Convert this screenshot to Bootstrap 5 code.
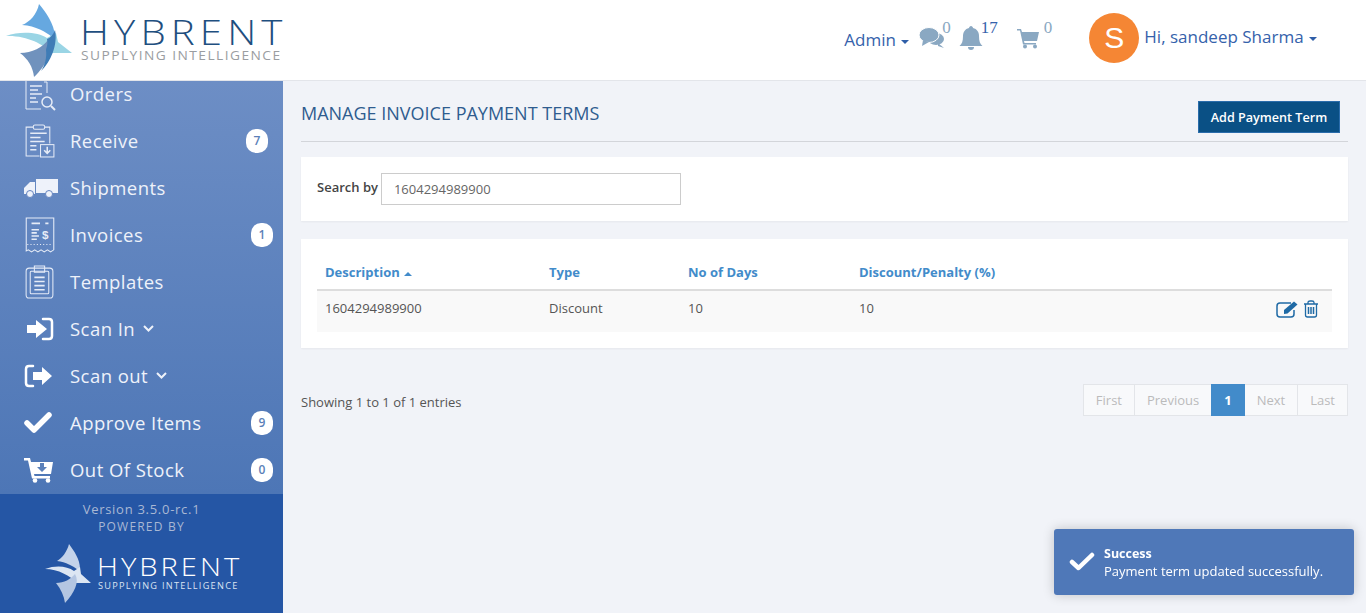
<!DOCTYPE html>
<html>
<head>
  <title>Manage Invoice Payment Terms</title>
  <link href="https://cdn.jsdelivr.net/npm/bootstrap@5.3.0/dist/css/bootstrap.min.css" rel="stylesheet">
  <style>
    body { font-family: "Open Sans", "Liberation Sans", sans-serif; background: #f1f3f8; color: #555; overflow: hidden; }
    .top-bar { height: 81px; background: #fff; border-bottom: 1px solid #e3e5ea; flex: none; }
    .top-tools { margin-right: 49px; margin-bottom: 4px; }
    .top-link { color: #3562ab; font-size: 17px; text-decoration: none; }
    .admin-link { margin-top: 4px; }
    .name-link { margin-bottom: 2px; margin-left: 5px; }
    .caret-down { display: inline-block; width: 0; height: 0; border: 4px solid transparent; border-top-color: #2f5ea8; border-bottom: 0; vertical-align: middle; margin-left: 1px; }
    .top-count { font-family: "Liberation Serif", serif; font-size: 17px; color: #8aa8c2; line-height: 1; align-self: flex-start; margin-top: 6px; }
    .top-count.dark { color: #3562ab; }
    .ico-chat { margin-left: 10px; }
    .count-chat { margin-left: -3px; }
    .ico-bell { margin-left: 8px; }
    .count-bell { margin-left: -2px; }
    .ico-cart { margin-left: 18px; }
    .count-cart { margin-left: 4px; }
    .avatar { width: 50px; height: 50px; border-radius: 50%; background: #f58634; color: #fff; font-family: "Liberation Sans", sans-serif; font-size: 30px; line-height: 50px; text-align: center; margin-left: 37px; }
    .side { width: 283px; flex: none; }
    .side-nav { background: linear-gradient(#6d8ec5, #4d76b6); overflow: hidden; min-height: 0; }
    .side-row { height: 47px; flex: none; padding-left: 24px; padding-bottom: 2px; color: #eef2fa; font-size: 18.5px; letter-spacing: .45px; text-decoration: none; }
    .side-ico { width: 46px; flex: none; display: flex; }
    .side-pill { width: 22px; height: 24px; border-radius: 10px; background: #fff; color: #5b7fb8; font-size: 12px; font-weight: 600; letter-spacing: 0; text-align: center; line-height: 24px; margin-left: auto; margin-right: 10px; }
    .side-pill.wide { margin-right: 15px; }
    .side-foot { height: 119px; flex: none; background: #2556a5; color: #a9b8d4; text-align: center; }
    .ver-line { font-size: 13px; letter-spacing: .72px; line-height: 18px; padding-top: 6px; }
    .pow-line { font-size: 12px; letter-spacing: 1.2px; line-height: 18px; }
    .foot-logo { margin-top: 7px; }
    .content-area { padding: 0 18px; min-width: 0; }
    .page-title { font-size: 18px; color: #2f5c8f; font-weight: 400; margin: 2px 0 0; }
    .title-row { height: 61px; border-bottom: 1px solid #d3d5da; padding-top: 20px; }
    .add-btn { background: #0a5085; border: 1px solid #2a6cab; border-radius: 0; color: #fff; font-size: 12.6px; font-weight: 600; width: 142px; height: 32px; padding: 3px 0 0; margin-right: 8px; }
    .add-btn:hover { background: #0a5085; color: #fff; }
    .white-box { background: #fff; box-shadow: 0 1px 2px rgba(0,0,0,.05); padding: 16px; }
    .search-box { margin-top: 15px; }
    .table-box { margin-top: 18px; }
    .search-label { font-size: 13px; font-weight: 600; color: #444; margin-right: 3px; margin-bottom: 2px; }
    .search-input { width: 300px; height: 32px; border: 1px solid #ccc; border-radius: 0; padding: 0 12px; font-size: 13px; color: #666; }
    .terms-table { table-layout: fixed; margin: 0; font-size: 13px; line-height: 20px; }
    .terms-table th { color: #428bca; font-weight: 700; border-bottom: 2px solid #ddd; padding: 7px 8px; }
    .terms-table td { background: #f9f9f9; color: #555; padding: 7px 8px 14px; border: 0; vertical-align: top; }
    .col-desc { width: 224px; }
    .col-type { width: 139px; }
    .col-days { width: 171px; }
    .row-tools { margin-top: 2px; margin-right: 5px; }
    .caret-up { display: inline-block; width: 0; height: 0; border: 4px solid transparent; border-bottom-color: #428bca; border-top: 0; vertical-align: middle; margin-left: 1px; }
    .pager-row { margin-top: 36px; }
    .info-text { font-size: 13px; color: #555; margin-top: 6px; }
    .pager .page-link { font-size: 13px; height: 32px; line-height: 30px; padding: 0 12px; color: #bbb; background: #f8f9fb; border: 1px solid #e3e5e9; border-radius: 0 !important; }
    .pager .page-item.active .page-link { background: #428bca; border-color: #428bca; color: #fff; font-weight: 700; }
    .done-toast { position: fixed; right: 12px; bottom: 18px; width: 300px; height: 66px; background: #4f78b8; border-radius: 3px; color: #fff; font-size: 13px; line-height: 18px; box-shadow: 0 0 12px rgba(0,0,0,.2); padding-left: 15px; }
    .toast-text { padding-top: 1px; margin-left: 1px; }
    .toast-head { font-size: 12.5px; font-weight: 700; line-height: 16px; }
  </style>
</head>
<body>
  <div class="d-flex flex-column vh-100">
    <header class="top-bar d-flex align-items-center">
      <svg width="290" height="80" viewBox="0 0 290 80">
        <path d="M39 4C46 12 54 24 55 36L52 37C46 32 36 26 22 25C30 22 37 14 39 4Z" fill="#66a8e0"/>
        <path d="M6 36C20 31 38 32 47 38L56 33L58 42L72 53L50 53C45 44 25 35 6 36Z" fill="#9ad5e5"/>
        <path d="M20 53C32 53 43 47 48 40C54 50 46 66 34 77C33 67 28 59 20 53Z" fill="#7092bd"/>
        <path d="M55 30C58 44 51 62 41 71C45 65 47 57 46 50C47 46 48 44 47 39C50 38 53 35 55 30Z" fill="#3f7cb6"/>
        <text transform="translate(80 45) scale(1.15 1)" font-family="Open Sans" font-weight="300" font-size="35" fill="#1f4f7f" textLength="176">HYBRENT</text>
        <text transform="translate(81 60) scale(1.1 1)" font-family="Open Sans" font-size="12.500" fill="#9a9da1" textLength="181">SUPPLYING INTELLIGENCE</text>
      </svg>
      <div class="ms-auto d-flex align-items-center top-tools">
        <a class="top-link admin-link" href="#">Admin <span class="caret-down"></span></a>
        <svg class="ico-chat" width="26" height="24" viewBox="0 0 26 24"><ellipse cx="17" cy="13" rx="8" ry="6" fill="#8aa8c2"/><path d="M19 17L25 22L19 20Z" fill="#8aa8c2"/><ellipse cx="10" cy="9" rx="10" ry="7.500" fill="#8aa8c2" stroke="#fff"/><path d="M4 14L3 20L10 16Z" fill="#8aa8c2"/></svg>
        <span class="top-count count-chat">0</span>
        <svg class="ico-bell" width="24" height="26" viewBox="0 0 24 26"><path d="M12 1C13 1 14 2 14 3C18 4 20 7 20 11C20 16 21 19 23.500 21H.5C3 19 4 16 4 11C4 7 6 4 10 3C10 2 11 1 12 1Z" fill="#8aa8c2"/><path d="M9 22H15C15 24 14 25 12 25C10 25 9 24 9 22Z" fill="#8aa8c2"/></svg>
        <span class="top-count dark count-bell">17</span>
        <svg class="ico-cart" width="24" height="22" viewBox="0 0 24 22"><path d="M1 2H5L6 5H23L21 14H8L8.500 16H20V17.500H7L4 3.500H1Z" fill="#8aa8c2"/><circle cx="9" cy="19.500" r="2" fill="#8aa8c2"/><circle cx="19" cy="19.500" r="2" fill="#8aa8c2"/></svg>
        <span class="top-count count-cart">0</span>
        <div class="avatar">S</div>
        <a class="top-link name-link" href="#">Hi, sandeep Sharma <span class="caret-down"></span></a>
      </div>
    </header>

    <div class="d-flex flex-grow-1 overflow-hidden">
      <aside class="side d-flex flex-column">
        <nav class="side-nav flex-grow-1 d-flex flex-column justify-content-end">
          <a class="side-row d-flex align-items-center" href="#">
            <span class="side-ico"><svg width="32" height="36" viewBox="0 0 32 36" fill="none" stroke="#e6ecf7" stroke-width="1"><path d="M13 2H2V33H17M23 17V6H20"/><path d="M6 10H18M6 14H14M6 18H18M6 22H12M6 26H14" stroke-width="1.500"/><circle cx="23" cy="26" r="5" stroke-width="1.500"/><path d="M27 30L31 34" stroke-width="2"/></svg></span>
            Orders
          </a>
          <a class="side-row d-flex align-items-center" href="#">
            <span class="side-ico"><svg width="31" height="35" viewBox="0 0 30 34" fill="none" stroke="#e6ecf7" stroke-width="1"><path d="M9 4H2V32H15M20 4H25V20"/><rect x="9" y="2" width="11" height="4" rx="1.500"/><path d="M6 10H22M6 14H16M6 18H20M6 22H12M6 26H12" stroke-width="1.500"/><rect x="16" y="21" width="13" height="12"/><path d="M22.500 23V29M19.500 26.500L22.500 29.500L25.500 26.500" stroke-width="1.500"/></svg></span>
            Receive
            <span class="side-pill wide">7</span>
          </a>
          <a class="side-row d-flex align-items-center" href="#">
            <span class="side-ico"><svg width="34" height="20" viewBox="0 0 34 20"><path d="M12 1H34V15H12Z" fill="#eef2fa"/><path d="M11 4H6L0 10V16H11Z" fill="#eef2fa"/><circle cx="6" cy="16" r="3.500" fill="#eef2fa" stroke="#6483bf"/><circle cx="25" cy="16" r="3.500" fill="#eef2fa" stroke="#6483bf"/></svg></span>
            Shipments
          </a>
          <a class="side-row d-flex align-items-center" href="#">
            <span class="side-ico"><svg width="32" height="36" viewBox="0 0 30 34" fill="none" stroke="#e6ecf7" stroke-width="1"><path d="M2 1H28V31L25 33L22 31L19 33L16 31L13 33L10 31L7 33L4 31L2 32Z"/><path d="M7 6H15M20 6H23M7 12H14M7 15H12M7 18H14M7 21H12" stroke-width="1.500"/><path d="M3 26H27" stroke-dasharray="1 2"/><text x="17" y="21" font-family="Liberation Sans" font-size="11" font-weight="700" fill="#e6ecf7" stroke="none">$</text></svg></span>
            Invoices
            <span class="side-pill">1</span>
          </a>
          <a class="side-row d-flex align-items-center" href="#">
            <span class="side-ico"><svg width="31" height="35" viewBox="0 0 30 34" fill="none" stroke="#e6ecf7" stroke-width="1"><rect x="2" y="4" width="26" height="29" rx="3"/><rect x="6" y="7" width="18" height="22" rx="1"/><path d="M10 4V2H20V4M10 4V8H20V4"/><path d="M10 13H20M10 17H20M10 21H20M10 25H20" stroke-width="1.500"/></svg></span>
            Templates
          </a>
          <a class="side-row d-flex align-items-center" href="#">
            <span class="side-ico"><svg width="30" height="24" viewBox="0 0 30 24"><path d="M3 8H12V3L23 12L12 21V16H3Z" fill="#fff"/><path d="M19 2H25C27 2 28 3 28 5V19C28 21 27 22 25 22H19" fill="none" stroke="#fff" stroke-width="2.500" stroke-linecap="round"/></svg></span>
            <span>Scan In</span><svg class="ms-2" width="11" height="7" viewBox="0 0 11 7"><path d="M1 1L5.500 5.500L10 1" fill="none" stroke="#eef2fa" stroke-width="2"/></svg>
          </a>
          <a class="side-row d-flex align-items-center" href="#">
            <span class="side-ico"><svg width="29" height="24" viewBox="0 0 29 24"><path d="M9 2H5C3 2 2 3 2 5V19C2 21 3 22 5 22H9" fill="none" stroke="#fff" stroke-width="2.500" stroke-linecap="round"/><path d="M9 8H18V3L28 12L18 21V16H9Z" fill="#fff"/></svg></span>
            <span>Scan out</span><svg class="ms-2" width="11" height="7" viewBox="0 0 11 7"><path d="M1 1L5.500 5.500L10 1" fill="none" stroke="#eef2fa" stroke-width="2"/></svg>
          </a>
          <a class="side-row d-flex align-items-center" href="#">
            <span class="side-ico"><svg width="28" height="22" viewBox="0 0 28 22"><path d="M3 11L10 18L25 3" fill="none" stroke="#fff" stroke-width="5.500" stroke-linejoin="round" stroke-linecap="round"/></svg></span>
            Approve Items
            <span class="side-pill">9</span>
          </a>
          <a class="side-row d-flex align-items-center" href="#">
            <span class="side-ico"><svg width="30" height="26" viewBox="0 0 30 26"><path d="M0 1H6L7 5H29L27 17H10L10.500 19H26V21.500H8L4 3.500H0Z" fill="#fff"/><circle cx="11" cy="23.500" r="2.300" fill="#fff"/><circle cx="24" cy="23.500" r="2.300" fill="#fff"/><path d="M16 6H20V10H23L18 15L13 10H16Z" fill="#5a80ba"/></svg></span>
            Out Of Stock
            <span class="side-pill">0</span>
          </a>
        </nav>
        <div class="side-foot">
          <div class="ver-line">Version 3.5.0-rc.1</div>
          <div class="pow-line">POWERED BY</div>
          <svg class="d-block foot-logo" width="283" height="65" viewBox="0 0 283 65">
            <path d="M69 1C74 8 80 16 80 26L78 27C73 23 66 19 57 18C62 15 67 9 69 1Z" fill="#c4d3ea"/>
            <path d="M45 26C56 22 67 23 74 28L80 24L81 31L91 40L76 40C71 33 58 26 45 26Z" fill="#dce6f3"/>
            <path d="M56 40C64 40 71 36 75 31C80 39 74 50 65 60C64 53 61 46 56 40Z" fill="#b4c6e2"/>
            <text transform="translate(97 33) scale(1.12 1)" font-family="Open Sans" font-weight="300" font-size="26" fill="#fff" textLength="127">HYBRENT</text>
            <text transform="translate(98 46) scale(1.08 1)" font-family="Open Sans" font-size="8.500" fill="#dbe4f3" textLength="129">SUPPLYING INTELLIGENCE</text>
          </svg>
        </div>
      </aside>

      <main class="flex-grow-1 content-area">
        <div class="title-row d-flex justify-content-between">
          <h1 class="page-title">MANAGE INVOICE PAYMENT TERMS</h1>
          <button class="btn add-btn" type="button">Add Payment Term</button>
        </div>

        <div class="white-box search-box d-flex align-items-center">
          <label class="search-label" for="searchBy">Search by</label>
          <input class="form-control search-input" id="searchBy" value="1604294989900">
        </div>

        <div class="white-box table-box">
          <table class="table terms-table">
            <colgroup><col class="col-desc"><col class="col-type"><col class="col-days"><col></colgroup>
            <thead>
              <tr><th>Description <span class="caret-up"></span></th><th>Type</th><th>No of Days</th><th>Discount/Penalty (%)</th></tr>
            </thead>
            <tbody>
              <tr>
                <td>1604294989900</td><td>Discount</td><td>10</td>
                <td>
                  <div class="d-flex justify-content-between">
                    <span>10</span>
                    <span class="d-flex gap-1 row-tools">
                      <svg width="23" height="18" viewBox="0 0 23 18" fill="none"><path d="M15 3H4C2 3 1 4.500 1 6V14C1 15.500 2 17 4 17H15C17 17 18 15.500 18 14V10" stroke="#1f6aa5" stroke-width="1.500"/><path d="M8 10L18 1.500L21.500 4.500L11.500 13.500L8 14Z" fill="#1f6aa5"/></svg>
                      <svg width="16" height="18" viewBox="0 0 16 18" fill="none" stroke="#1f6aa5" stroke-width="1.300"><path d="M1 4H15M5 4V2.500C5 1.500 6 1 7 1H9C10 1 11 1.500 11 2.500V4M2.500 4V15C2.500 16 3.500 17 4.500 17H11.500C12.500 17 13.500 16 13.500 15V4"/><path d="M5.500 7V14M8 7V14M10.500 7V14" stroke-width="1.500"/></svg>
                    </span>
                  </div>
                </td>
              </tr>
            </tbody>
          </table>
        </div>

        <div class="pager-row d-flex justify-content-between align-items-center">
          <span class="info-text">Showing 1 to 1 of 1 entries</span>
          <ul class="pagination pager m-0">
            <li class="page-item"><a class="page-link" href="#">First</a></li>
            <li class="page-item"><a class="page-link" href="#">Previous</a></li>
            <li class="page-item active"><a class="page-link" href="#">1</a></li>
            <li class="page-item"><a class="page-link" href="#">Next</a></li>
            <li class="page-item"><a class="page-link" href="#">Last</a></li>
          </ul>
        </div>
      </main>
    </div>
  </div>

  <div class="done-toast d-flex align-items-center">
    <svg width="26" height="20" viewBox="0 0 26 20" class="me-2"><path d="M3 10L9.500 16L23 3" fill="none" stroke="#fff" stroke-width="4.500" stroke-linejoin="round" stroke-linecap="round"/></svg>
    <div class="toast-text"><div class="toast-head">Success</div><div>Payment term updated successfully.</div></div>
  </div>

  <script src="https://cdn.jsdelivr.net/npm/bootstrap@5.3.0/dist/js/bootstrap.bundle.min.js"></script>
</body>
</html>
